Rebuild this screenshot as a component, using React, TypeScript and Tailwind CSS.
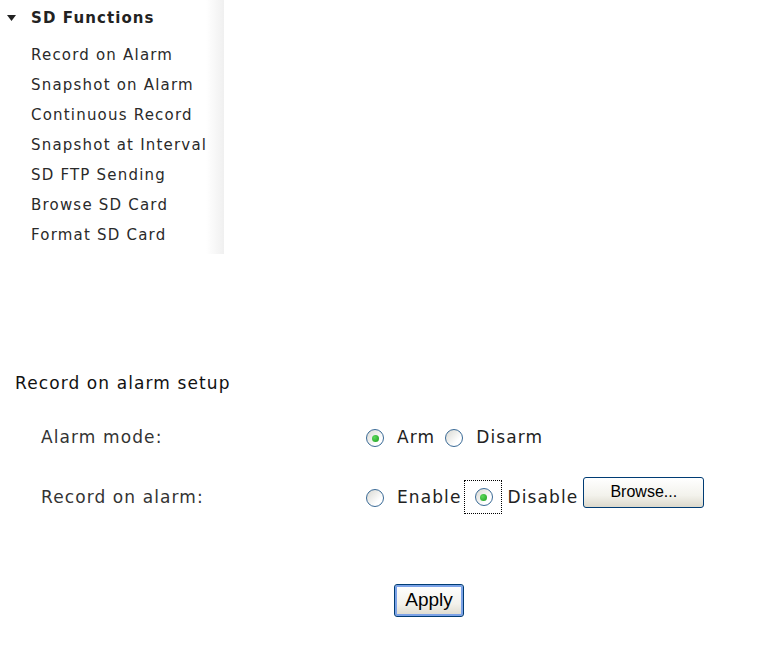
const menuItems = [
  "Record on Alarm",
  "Snapshot on Alarm",
  "Continuous Record",
  "Snapshot at Interval",
  "SD FTP Sending",
  "Browse SD Card",
  "Format SD Card",
];

function Radio({ checked }: { checked?: boolean }) {
  return (
    <span className="flex h-[18px] w-[18px] shrink-0 items-center justify-center rounded-full border border-[#3a6a96] bg-[linear-gradient(135deg,#d8d8d2,#ffffff_70%)]">
      {checked && (
        <span className="h-[7px] w-[7px] rounded-full bg-[radial-gradient(circle_at_35%_35%,#5ad85a,#1e9e1e)]" />
      )}
    </span>
  );
}

export default function App() {
  return (
    <div className="h-[647px] w-[783px] overflow-hidden bg-white font-['DejaVu_Sans',Verdana,sans-serif]">
      {/* sidebar */}
      <div className="h-[254px] w-[224px] bg-[linear-gradient(to_right,#ffffff_92%,#f0f0f0)] pt-[1px]">
        <div className="flex h-[34px] items-center pl-[7px]">
          <svg width="9" height="6" viewBox="0 0 9 6" className="mr-[15px]">
            <path d="M0 0h9L4.5 6z" fill="#222" />
          </svg>
          <span className="text-[15px] font-bold tracking-[1.1px] text-[#222]">
            SD Functions
          </span>
        </div>
        <div className="pt-[5px]">
          {menuItems.map((item) => (
            <div
              key={item}
              className="flex h-[30px] items-center pl-[31px] text-[15px] tracking-[1.2px] text-[#2a2a2a]"
            >
              {item}
            </div>
          ))}
        </div>
      </div>

      {/* main form */}
      <div className="pt-[118px] text-[17px] tracking-[1.1px]">
        <div className="flex h-[24px] items-center pl-[15px] text-[#111]">
          Record on alarm setup
        </div>

        <div className="mt-[24px] flex flex-col gap-[24px] pl-[41px]">
          <div className="grid h-[36px] grid-cols-[325px_auto] items-center">
            <span className="text-[#333]">Alarm mode:</span>
            <div className="flex items-center text-[#222]">
              <Radio checked />
              <span className="ml-[13px]">Arm</span>
              <span className="ml-[10px]">
                <Radio />
              </span>
              <span className="ml-[13px]">Disarm</span>
            </div>
          </div>

          <div className="grid h-[36px] grid-cols-[325px_auto] items-center">
            <span className="text-[#333]">Record on alarm:</span>
            <div className="flex items-center text-[#222]">
              <Radio />
              <span className="ml-[13px]">Enable</span>
              <span className="-mt-[1px] mb-[1px] ml-[2px] flex h-[34px] items-center border border-dotted border-black pl-[10px] pr-[8px]">
                <Radio checked />
              </span>
              <span className="ml-[6px]">Disable</span>
              <button
                type="button"
                className="-mt-[6px] mb-[6px] ml-[5px] h-[31px] w-[121px] rounded-[3px] border border-[#003c74] bg-[linear-gradient(#ffffff,#f3f2ec_60%,#dcd9cc)] font-['Liberation_Sans',Arial,sans-serif] text-[16px] tracking-normal text-black"
              >
                Browse...
              </button>
            </div>
          </div>
        </div>

        <div className="mt-[68px] pl-[394px]">
          <button
            type="button"
            className="h-[33px] w-[70px] rounded-[3px] border border-[#003c74] bg-[linear-gradient(#ffffff,#f3f2ec_60%,#dcd9cc)] font-['Liberation_Sans',Arial,sans-serif] text-[19px] tracking-normal text-black shadow-[inset_0_0_0_2px_#7ba2e7]"
          >
            Apply
          </button>
        </div>
      </div>
    </div>
  );
}
